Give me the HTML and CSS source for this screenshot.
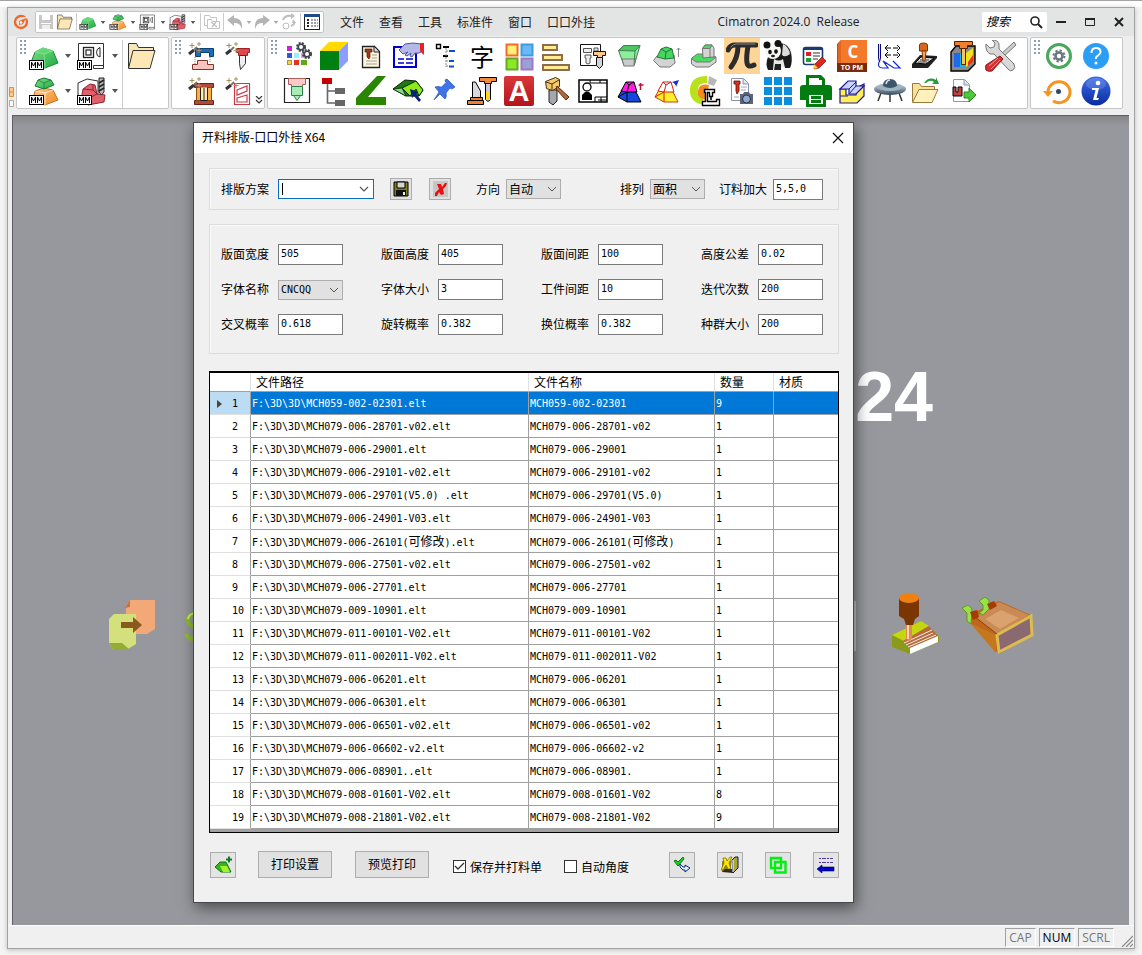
FILE: index.html
```html
<!DOCTYPE html>
<html lang="zh-CN">
<head>
<meta charset="utf-8">
<title>Cimatron 2024.0 Release</title>
<link rel="stylesheet" href="styles.css">
</head>
<body>
<svg class="defs" aria-hidden="true">
  <defs>
    <linearGradient id="gGreen" x1="0" y1="0" x2="1" y2="1"><stop offset="0" stop-color="#7fe08d"/><stop offset="1" stop-color="#1fa83f"/></linearGradient>
    <linearGradient id="gOrange" x1="0" y1="0" x2="1" y2="1"><stop offset="0" stop-color="#ffc98a"/><stop offset="1" stop-color="#f08a24"/></linearGradient>
    <linearGradient id="gRed" x1="0" y1="0" x2="0" y2="1"><stop offset="0" stop-color="#d9383a"/><stop offset="1" stop-color="#b3151b"/></linearGradient>
    <linearGradient id="gBlue" x1="0" y1="0" x2="0" y2="1"><stop offset="0" stop-color="#3f6fe8"/><stop offset="1" stop-color="#0a2aa0"/></linearGradient>
    <linearGradient id="gUfo" x1="0" y1="0" x2="0" y2="1"><stop offset="0" stop-color="#dfe9f0"/><stop offset="1" stop-color="#30475c"/></linearGradient>
    <symbol id="cube-green" viewBox="0 0 32 32">
      <path d="M2 25 7 12 15 8 25 11 30 23 17 28Z" fill="url(#gGreen)" stroke="#1d8a38"/>
      <path d="M7 12 15 8 25 11 16 14Z" fill="#5fd873" stroke="#8aeb98" stroke-width=".7"/><path d="M16 14 17 28" stroke="#8aeb98" stroke-width=".7"/>
      <use href="#mm"/>
    </symbol>
    <symbol id="mm" viewBox="0 0 32 32">
      <rect x="1.500" y="20.500" width="14" height="9" fill="#fff" stroke="#000"/>
      <path d="M3.500 28v-6l2 4 2-4v6M9.500 28v-6l2 4 2-4v6" fill="none" stroke="#000"/>
    </symbol>
    <symbol id="cube-stack" viewBox="0 0 32 32">
      <path d="M4 27 7 16 16 13 25 15 30 25 17 30Z" fill="url(#gOrange)" stroke="#c4731f"/>
      <path d="M7 16 17 18 25 15M17 18v12" fill="none" stroke="#fff" stroke-width=".7"/>
      <path d="M7 11 10 5 16 3 23 5 26 10 16 14Z" fill="url(#gGreen)" stroke="#1d7a38"/><path d="M10 5 16 8 23 5M16 8v6" fill="none" stroke="#1d7a38" stroke-width=".8"/>
      <use href="#mm"/>
    </symbol>
    <symbol id="drawing" viewBox="0 0 32 32">
      <path d="M2.500 3.500h25v25h-10v-3h10" fill="#fff" stroke="#333"/><path d="M2.500 3.500v18" stroke="#333"/>
      <rect x="7.500" y="7.500" width="10" height="10" fill="none" stroke="#222" stroke-width="1.300"/><rect x="10" y="10" width="5" height="5" fill="none" stroke="#222" stroke-width="1.200"/>
      <path d="M24 7.500q-3.500 1-3.500 5t3.500 4.500z" fill="none" stroke="#222"/><use href="#mm"/>
    </symbol>
    <symbol id="mill" viewBox="0 0 32 32">
      <path d="M2 8 11 4 22 6V22L10 26 2 20Z" fill="#fff" stroke="#333"/>
      <path d="M5 25 7 14 14 9 19 10 21 19 29 20 28 27 12 30Z" fill="#e0606c" stroke="#8e2430"/><path d="M7 14 17 15 21 19 15 22 12 30M17 15V10" fill="none" stroke="#8e2430"/>
      <path d="M23 3h5v14l-2.500 3L23 17Z" fill="#bbb" stroke="#222"/><path d="M23 8l5-3M23 12l5-3M23 16l5-3" stroke="#222" stroke-width="1.500"/><use href="#mm"/>
    </symbol>
    <symbol id="folder" viewBox="0 0 32 32">
      <path d="M2.500 28V3.500h8l2 4h15V12" fill="#fbe6b8" stroke="#333"/><path d="M2.500 28.500 7 10.500h22L24 28.500Z" fill="#fde7b4" stroke="#333"/>
    </symbol>
    <symbol id="wand" viewBox="0 0 32 32">
      <path d="M3 14 8 10" stroke="#333" stroke-width="3"/><path d="M8 10 11 7" stroke="#777" stroke-width="2"/>
      <path d="M6 3v5M3.500 5.500h5M13 8v5M10.500 10.500h5M13 2v4M11 4h4" stroke="#a8905c"/>
    </symbol>
    <symbol id="down" viewBox="0 0 8 6"><path d="M1 1h6L4 5Z" fill="#555"/></symbol>
    <symbol id="chev" viewBox="0 0 10 6"><path d="M1 1l4 4 4-4" fill="none" stroke="#555" stroke-width="1.200"/></symbol>
  </defs>
</svg>

<div class="window">
  <header class="titlebar">
    <svg class="logo" viewBox="0 0 16 16"><circle cx="8" cy="8" r="6" fill="none" stroke="#f0672a" stroke-width="2.400"/><path d="M16 3 11 6 9 3Z" fill="#e3e5e5"/><path d="M13 4 10 10 6 11 6 7Z" fill="#ef6a25"/><circle cx="8" cy="8.500" r="1.300" fill="#fff"/></svg>
    <div class="quick">
      <button aria-label="保存"><svg viewBox="0 0 18 18"><path d="M2 2h14v14H2Z" fill="#c8c8c8"/><path d="M5 2h8v5H5ZM4 10h10v1H4Z" fill="#fff"/><path d="M5 12h8v4H5Z" fill="#eee"/></svg></button>
      <button aria-label="打开"><svg viewBox="0 0 32 32"><use href="#folder"/></svg></button>
      <i class="sep"></i>
      <button aria-label="新建零件"><svg viewBox="0 0 32 32"><use href="#cube-green"/></svg></button><button class="drop" aria-label="更多"><svg viewBox="0 0 8 6"><use href="#down"/></svg></button>
      <button aria-label="新建装配"><svg viewBox="0 0 32 32"><use href="#cube-stack"/></svg></button><button class="drop" aria-label="更多"><svg viewBox="0 0 8 6"><use href="#down"/></svg></button>
      <button aria-label="新建图纸"><svg viewBox="0 0 32 32"><use href="#drawing"/></svg></button><button class="drop" aria-label="更多"><svg viewBox="0 0 8 6"><use href="#down"/></svg></button>
      <button aria-label="新建加工"><svg viewBox="0 0 32 32"><use href="#mill"/></svg></button><button class="drop" aria-label="更多"><svg viewBox="0 0 8 6"><use href="#down"/></svg></button>
      <i class="sep"></i>
      <button class="off" aria-label="复制"><svg viewBox="0 0 18 18" fill="#fff" stroke="#c4c4c4"><path d="M1.500 12.500v-10h5l1 2h6v8Z"/><path d="M4.500 15.500v-9h4l1 2h7v7Z"/><path d="M8 9l6 5M13 9l-4 5" stroke-width="1.500"/></svg></button>
      <i class="sep"></i>
      <button class="off" aria-label="撤销"><svg viewBox="0 0 18 18"><path d="M1 7l7-5v3q9 0 8 11-2-7-8-6v3Z" fill="#b4b4b4"/></svg></button><button class="drop narrow" aria-label="更多"><svg viewBox="0 0 8 6"><use href="#down"/></svg></button>
      <button class="off" aria-label="重做"><svg viewBox="0 0 18 18"><path d="M17 7l-7-5v3Q1 5 2 16q2-7 8-6v3Z" fill="#b4b4b4"/></svg></button><button class="drop narrow" aria-label="更多"><svg viewBox="0 0 8 6"><use href="#down"/></svg></button>
      <button class="off" aria-label="刷新"><svg viewBox="0 0 18 18" fill="none" stroke="#bdbdbd" stroke-width="2"><path d="M3 7q2-5 8-4M15 9q-1 3-4 4"/><path d="M11 0v6l4-3ZM12 10l4 0-3-4Z" fill="#bdbdbd" stroke="none"/><circle cx="6" cy="13" r="3" stroke-width="1"/></svg></button>
      <i class="sep"></i>
      <button aria-label="特征树"><svg viewBox="0 0 18 18"><rect x="1.500" y="1.500" width="15" height="15" fill="#fff" stroke="#222"/><path d="M1 2.500h16" stroke="#234a86" stroke-width="3"/><path d="M4 7h2M4 10h2M4 13h2" stroke="#222" stroke-width="2"/><path d="M8 7h7M8 10h7M8 13h7" stroke="#444" stroke-dasharray="2 1"/></svg></button>
    </div>
    <nav class="menu"><a href="#">文件</a><a href="#">查看</a><a href="#">工具</a><a href="#">标准件</a><a href="#">窗口</a><a href="#">口口外挂</a></nav>
    <h1>Cimatron 2024.0  Release</h1>
    <div class="search"><input type="search" aria-label="搜索" placeholder="搜索"><svg viewBox="0 0 14 14"><circle cx="6" cy="6" r="4" fill="none" stroke="#222" stroke-width="1.600"/><path d="M9 9l4 4" stroke="#222" stroke-width="2"/></svg></div>
    <div class="winbtns">
      <button aria-label="最小化"><svg viewBox="0 0 12 12"><path d="M1 6h10" stroke="#222" stroke-width="2"/></svg></button>
      <button aria-label="最大化"><svg viewBox="0 0 12 12"><path d="M1.500 2.500h9v7h-9Z" fill="none" stroke="#222"/><path d="M1 3h10" stroke="#222" stroke-width="2"/></svg></button>
      <button aria-label="关闭"><svg viewBox="0 0 12 12"><path d="M2 2l8 8M10 2l-8 8" stroke="#222" stroke-width="2"/></svg></button>
    </div>
  </header>

  <div class="ribbon">
    <svg class="gutter" viewBox="0 0 6 20"><path d="M.5.5h4v9h-4ZM.5 5h4" fill="#ffc98a" stroke="#e88c30"/><path d="M.5 13.500h4v6h-4Z" fill="#fff" stroke="#aaa"/></svg>
    <section class="panel files">
      <i class="grip"></i>
      <div class="split-grid">
        <button aria-label="零件"><svg viewBox="0 0 32 32"><use href="#cube-green"/></svg></button><button class="drop" aria-label="零件选项"><svg viewBox="0 0 8 6"><use href="#down"/></svg></button>
        <button aria-label="图纸"><svg viewBox="0 0 32 32"><use href="#drawing"/></svg></button><button class="drop" aria-label="图纸选项"><svg viewBox="0 0 8 6"><use href="#down"/></svg></button>
        <button aria-label="装配"><svg viewBox="0 0 32 32"><use href="#cube-stack"/></svg></button><button class="drop" aria-label="装配选项"><svg viewBox="0 0 8 6"><use href="#down"/></svg></button>
        <button aria-label="加工"><svg viewBox="0 0 32 32"><use href="#mill"/></svg></button><button class="drop" aria-label="加工选项"><svg viewBox="0 0 8 6"><use href="#down"/></svg></button>
      </div>
      <i class="rule"></i>
      <button class="open" aria-label="打开文件"><svg viewBox="0 0 32 32"><use href="#folder"/></svg></button>
    </section>
    <section class="panel wiz">
      <i class="grip"></i>
      <div class="icons two">
        <button aria-label="模具向导"><svg viewBox="0 0 32 32"><path d="M9.500 8.500h18v8h-4v-4h-9v4h-5Z" fill="#1e6cb5" stroke="#0d3e74"/><path d="M6.500 29.500v-5h5v-4h10v4h6v5Z" fill="#f8c4be" stroke="#7d3431"/><path d="M9 17v7M24 17v5" stroke="#3a87c8" stroke-dasharray="1 1"/><use href="#wand"/></svg></button>
        <button aria-label="电极向导"><svg viewBox="0 0 32 32"><path d="M13.500 8.500h13v4h-2v3h-9v-3h-2Z" fill="#e0474a" stroke="#9b2226"/><path d="M16.500 15.500h6v8l-5 6-1-6Z" fill="#eee" stroke="#333"/><use href="#wand"/></svg></button>
        <button aria-label="模架向导"><svg viewBox="0 0 32 32"><path d="M8.500 8.500h19v4h-19ZM8.500 25.500h19v4h-19Z" fill="#b04a3a" stroke="#6b2018"/><path d="M10.500 12.500h15v13h-15Z" fill="#f7b04a" stroke="#8a4d0d"/><path d="M14.500 12.500v13h7v-13M18 13v12" fill="#ffe9b5" stroke="#222"/><use href="#wand"/></svg></button>
        <button aria-label="冷却向导"><svg viewBox="0 0 32 32"><path d="M11.500 8.500h15v21h-15ZM14 15l10-4v5l-10 4ZM14 23l10-3v7H14Z" fill="#fff" stroke="#c93a48" stroke-width="1.200"/><use href="#wand"/></svg></button>
      </div>
      <button class="more" aria-label="展开"><svg viewBox="0 0 8 8"><path d="M1 0l3 3 3-3M1 4l3 3 3-3" fill="none" stroke="#333" stroke-width="1.200"/></svg></button>
    </section>
    <section class="panel plug">
      <i class="grip"></i>
      <div class="icons twenty">
        <button aria-label="颜色设置"><svg viewBox="0 0 32 32"><path d="M5 6h5v5H5Z" fill="#f0f"/><path d="M5 13h5v5H5Z" fill="#2a55d8"/><path d="M5 20h5v5H5Z" fill="#ffd428"/><path d="M12 13h5v5h-5Z" fill="#9ef"/><path d="M12 20h5v5h-5Z" fill="#e8321e"/><path d="M19 13h4v5h-4Z" fill="#e69af0"/><path d="M19 20h6v5h-6Z" fill="#62a812"/><path d="M5.500 6.500h4v4h-4zM5.500 13.500h4v4h-4zM5.500 20.500h4v4h-4z" fill="none" stroke="#666" stroke-width=".6"/><g fill="none" stroke="#3d444a"><circle cx="19" cy="7" r="4" stroke-width="2" stroke-dasharray="2 1.200"/><circle cx="19" cy="7" r="2.800" stroke-width="1.600"/><circle cx="25" cy="14" r="4" stroke-width="2" stroke-dasharray="2 1.200"/><circle cx="25" cy="14" r="2.800" stroke-width="1.600"/></g></svg></button>
        <button aria-label="毛坯"><svg viewBox="0 0 32 32"><path d="M1 11h19v19H1Z" fill="#008010"/><path d="M1 11 10 2h19l-9 9Z" fill="#ffd900"/><path d="M20 11 29 2v19l-9 9Z" fill="#8c9cff"/></svg></button>
        <button aria-label="图档"><svg viewBox="0 0 32 32"><path d="M6.500 6.500h12l5 5v16h-17Z" fill="#fdf6e0" stroke="#222" stroke-width="1.300"/><path d="M18 7v5h5" fill="#ddd" stroke="#222"/><path d="M9 9h7v3h-2v5l-1 2-2-2v-5H9Z" fill="#a0381c" stroke="#5a1608" stroke-width=".7"/><path d="M16 15h5M16 18h5M10 21h11M10 24h11" stroke="#a99f88"/></svg></button>
        <button aria-label="属性"><svg viewBox="0 0 32 32"><path d="M1 7h22v20H1Z" fill="#fff" stroke="#0000d0" stroke-width="2"/><path d="M5 19h6M13 19h7M5 23h6M13 23h7" stroke="#0000d0" stroke-width="1.600"/><path d="M6 10 12 4q8-2 16 0v8q-3 2-6 1l-3 4-2-1 1-3-4 3-2-1 3-3-5 2Z" fill="#b5b8e8" stroke="#5055a8"/><path d="M27 3h4v12q-4-3-4-5Z" fill="#f02020"/></svg></button>
        <button aria-label="结构树"><svg viewBox="0 0 32 32"><path d="M6.500 4.500h4v4h-4Z" fill="#fff" stroke="#000" stroke-width="1.400"/><path d="M13 7h6M13 16h5" stroke="#000" stroke-width="2"/><path d="M16 8v19M16 11h3M16 21h3M16 26h3" stroke="#888" fill="none" stroke-dasharray="2 1"/><path d="M19 11h6M19 21h5M19 26.500h5" stroke="#0a4fd8" stroke-width="2.200"/></svg></button>
        <button class="glyph" aria-label="刻字">字</button>
        <button aria-label="布局"><svg viewBox="0 0 32 32"><path d="M2.500 4.500h11v11h-11Z" fill="#fff176" stroke="#f36b2c" stroke-width="2"/><path d="M17.500 4.500h11v11h-11Z" fill="#6ab8f5" stroke="#3d9cdf" stroke-width="2"/><path d="M2.500 18.500h11v11h-11Z" fill="#8bea24" stroke="#6aa52c" stroke-width="2"/><path d="M17.500 18.500h11v11h-11Z" fill="#9ba0d5" stroke="#a276c4" stroke-width="2"/></svg></button>
        <button aria-label="排序"><svg viewBox="0 0 32 32" fill="#ffec94" stroke="#8f6c4b" stroke-width="2"><path d="M2 5h14v5H2ZM2 15h19v5H2ZM2 25h26v5H2Z"/></svg></button>
        <button aria-label="电极图"><svg viewBox="0 0 32 32"><path d="M2.500 4.500h20v21h-20Z" fill="#fff" stroke="#111"/><path d="M5.500 8.500h8v4h-8ZM7 15h6v3h-1v5l-2 1-2-1v-5H7ZM16 8h4v3h-4Z" fill="#eee" stroke="#555"/><path d="M15.500 11.500h12v4h-3v2h-5v-2h-4Z" fill="#fbc98c" stroke="#111"/><path d="M18.500 17.500h6v8l-3 3-3-3Z" fill="#d0d4da" stroke="#111"/></svg></button>
        <button aria-label="型腔"><svg viewBox="0 0 32 32" stroke="#4a7a55"><path d="M3.500 10.500 9 5.500h16L19 25.500H9Z" fill="#8cf09a"/><path d="M7 19h14l-2 7H9Z" fill="#ccc" stroke="#777"/><path d="M3.500 10.500 9 5.500h16L20 11Z" fill="#49c960"/><path d="M20 11 19 25" fill="none"/></svg></button>
        <button aria-label="型芯"><svg viewBox="0 0 32 32"><path d="M1.500 20.500 5 16l17-1 1 8-5 4H8Z" fill="#d3d3d3" stroke="#777"/><path d="M5 17 9 9l5-2 6 2 2 9-9 1Z" fill="#46d55e" stroke="#1f7a35"/><path d="M9 9l5 3 6-3M14 12l-1 7" stroke="#1f7a35" fill="none"/><path d="M26.500 17V8m-2 2 2-2 2 2" stroke="#888" fill="none"/></svg></button>
        <button aria-label="台阶"><svg viewBox="0 0 32 32" stroke="#777"><path d="M2.500 18.500 8 15l19 2v5l-7 5H7l-4.500-3Z" fill="#d4d4d4"/><path d="M2.500 18.500 8 14h6v3h13l-6 5H7Z" fill="#49dc60"/><path d="M13.500 8.500 16 5h7l2 3v9l-11 1Z" fill="#d4d4d4"/><path d="M13.500 8.500 16 5h7l-2 3.500Z" fill="#49dc60"/><path d="M21 8.500v9" fill="none"/></svg></button>
        <button class="on" aria-label="公式"><svg viewBox="0 0 32 32" fill="none" stroke="#2c2c2c" stroke-linecap="round"><path d="M2 10Q4 5 9 5H30" stroke-width="5"/><path d="M12 6Q12 18 5 27" stroke-width="5"/><path d="M22 6Q20 18 21 23T28 25" stroke-width="5"/><path d="M5 7Q7 4 10 4H29" stroke="#888" stroke-width="1"/></svg></button>
        <button aria-label="熊猫"><svg viewBox="0 0 32 32"><ellipse cx="18" cy="15" rx="11" ry="12" fill="#e9e9e4"/><path d="M17 3q9 1 11 10t-1 15h-5l-2-9q-4 3-9 0l-1 11H5Q2 24 5 17q7-2 12-14Z" fill="#1b1b1b"/><path d="M20 4q6 3 7 10-5 4-8 1Z" fill="#ddd"/><circle cx="10" cy="11" r="8" fill="#f6f6f2"/><circle cx="4" cy="5" r="3.500" fill="#111"/><circle cx="15" cy="3.500" r="3.500" fill="#111"/><ellipse cx="7" cy="12" rx="1.800" ry="2.200" fill="#111"/><ellipse cx="13" cy="11.500" rx="1.800" ry="2.200" fill="#111"/><ellipse cx="10" cy="16" rx="2" ry="1.300" fill="#222"/><path d="M12 24h6v6h-7Z" fill="#222"/></svg></button>
        <button aria-label="编辑表单"><svg viewBox="0 0 32 32"><rect x="3.500" y="7.500" width="19" height="17" rx="2" fill="#fff" stroke="#1c3a70" stroke-width="1.600"/><path d="M4 9h18" stroke="#1c3a70" stroke-width="2"/><path d="M6 12h5v4H6Z" fill="#e02020"/><path d="M6 18h5v4H6Z" fill="#19a030"/><path d="M13 13h7M13 16h7M13 19h5" stroke="#333"/><path d="m15 24 7-7 4 4-7 7-5 1Z" fill="#e3261c" stroke="#7a0e08" stroke-width=".7"/><path d="m14 24 4 4-5 1Z" fill="#ffd23a"/></svg></button>
        <button aria-label="C TO PM"><svg viewBox="0 0 32 32"><path d="M0 4 4 0h26v28l-3 4H0Z" fill="#c34a14"/><path d="M4 0h26v23H4Z" fill="#f47a2b"/><path d="M1 4 4 0v23H1Z" fill="#e8661c"/><path d="M0 23h30v9H0Z" fill="#7a2a0c"/><text x="16" y="18" class="t-c">C</text><text x="15" y="30" class="t-pm">TO PM</text></svg></button>
        <button aria-label="刀路"><svg viewBox="0 0 32 32" fill="none"><path d="M4.500 4v14l1 4 1-4V4" fill="#ffef5a" stroke="#0a0a80"/><path d="M12 8h13M12 15h13" stroke="#000" stroke-dasharray="5 2"/><path d="m14 5-3 3 3 3M23 5l3 3-3 3M14 12l-3 3 3 3M23 12l3 3-3 3" stroke="#000"/><path d="M5 22q-2 6 4 6h5l-5-7 11 7h6l-7-7" stroke="#1028d8" stroke-width="1.200"/></svg></button>
        <button aria-label="冲压"><svg viewBox="0 0 32 32"><path d="M1 24 9 15l17 1v2l-9 10H1Z" fill="#222"/><path d="M4 23 10 17l13 1-8 6Z" fill="#ddd" stroke="#000"/><path d="M7 22h9M9 20h9" stroke="#444"/><path d="M8.500 5q0-2 4-2t4 2v6h-8Z" fill="#d8691c" stroke="#7a3408"/><path d="M11 11h4l-1 10h-2Z" fill="#f0a860" stroke="#7a3408"/></svg></button>
        <button aria-label="放电"><svg viewBox="0 0 32 32"><path d="M3 12 8 6h19v18l-7 7H3Z" fill="#888" stroke="#000" stroke-width="1.400"/><path d="M6 13h6v14H6Z" fill="#1e6ae8"/><path d="M12 13h6v14h-6Z" fill="#1fb4e8"/><path d="m18 13 7-5v14l-7 5Z" fill="#f6e21c"/><path d="m20 22 5-7v7l-5 4Z" fill="#e8301c"/><path d="M6.500 1.500h18v4h-5v3h-8v-3h-5Z" fill="#f08030" stroke="#5a1e00"/><path d="M13.500 8.500h4v16h-4Z" fill="#f6c45c" stroke="#5a1e00"/></svg></button>
        <button aria-label="工具"><svg viewBox="0 0 32 32"><path d="M29 2 31 5 17 18l-3-2Z" fill="#ccc" stroke="#777"/><path d="M1 4 5 8l4-1 1-4-3-3q6 0 7 4v5l15 15q2 4-1 6t-5-1L9 14H5Q0 11 1 4Z" fill="#d8d8d8" stroke="#777"/><path d="M15 16 18 19 7 31q-4 1-6-1-1-3 0-5Z" fill="#d92f30" stroke="#8a1416"/><path d="m4 26 9-8M6 29l9-9" stroke="#ff9a96"/></svg></button>

        <button aria-label="电极"><svg viewBox="0 0 32 32"><path d="M2.500 3.500h25v24h-25Z" fill="#fff" stroke="#222" stroke-width="1.200"/><path d="M6.500 3.500h17v6h-3v2h-11v-2h-3Z" fill="#ffc9c9" stroke="#b05a5a"/><path d="M9.500 11.500h11v9h-2l-3.500 5-3.500-5h-2Z" fill="#a9ecb7" stroke="#2b8044"/><path d="M11 20.500h8" stroke="#2b8044"/></svg></button>
        <button aria-label="层级"><svg viewBox="0 0 32 32"><path d="M3 3h10v6H3Z" fill="#c40000"/><path d="M8.500 9v19H16M8.500 16H16" fill="none" stroke="#666" stroke-width="1.600"/><path d="M16 13h10v6H16ZM16 25h10v6H16Z" fill="#666"/></svg></button>
        <button aria-label="角度"><svg viewBox="0 0 32 32"><path d="M21 1h9L12 22h18v8H0v-7Z" fill="#2a8500"/></svg></button>
        <button aria-label="选择体"><svg viewBox="0 0 32 32"><path d="m0 14 12-9 11 1 7 9-4 6-13 0Z" fill="#1c7a10" stroke="#052a02"/><path d="m9 13 14-7 7 9-4 6-3-7-6 7Z" fill="#8ee81c" stroke="#052a02"/><path d="m0 14 9-1 4 8Z" fill="#8ad88a" stroke="#052a02" stroke-width=".8"/><path d="m17 14 8 3-2 2 5 6-2 2-5-6-2 2Z" fill="#0a1e80"/></svg></button>
        <button aria-label="固定"><svg viewBox="0 0 32 32"><path d="m17 4 8 8-3 2-2-1-4 5q1 4-1 6l-5-5-6 6 5-8-4-5q3-1 6 0l5-4-1-3Z" fill="#3f74e8" stroke="#2450b4" stroke-width=".7"/><path d="m16 7-5 5" stroke="#a9c4ff"/></svg></button>
        <button aria-label="刀柄"><svg viewBox="0 0 32 32"><path d="M5.500 23V7h3l5 9v7Z" fill="#d9d9df" stroke="#000"/><path d="M3.500 22.500h12v3h-12ZM.5 25.500h16v4H.5Z" fill="#f08030" stroke="#000"/><path d="M12.500 2.500h17v4h-5v2h-7v-2h-5Z" fill="#f08a3c" stroke="#000"/><path d="M18.500 8.500h5v16l-2.500 2-2.500-2Z" fill="#c8c8e0" stroke="#000"/><path d="M19 17h4v8h-4Z" fill="#ffd81c"/></svg></button>
        <button aria-label="标注文字"><svg viewBox="0 0 32 32"><rect y="1" width="30" height="30" rx="2" fill="url(#gRed)"/><text x="15" y="26" class="t-a">A</text></svg></button>
        <button aria-label="敲击"><svg viewBox="0 0 32 32"><path d="M8 15h8v11l-4 4-4-3Z" fill="#a4a8ac" stroke="#222"/><path d="m4.500 6.500 10-4 4 2v7l-7 4-6-2Z" fill="#f6c96a" stroke="#4a3208"/><path d="m5 7 6 2 7-4M11 9v6" stroke="#4a3208" fill="none"/><path d="m16 11 12 11-3 3-10-11Z" fill="#b56a3c" stroke="#5a2a10"/></svg></button>
        <button aria-label="图框"><svg viewBox="0 0 32 32"><path d="M1 5h28v22H1Z" fill="#fff" stroke="#000" stroke-width="1.500"/><path d="M12 5v3h17M22 5v3M17 27v-5h12M20 25h9M23 22v5" stroke="#000" fill="none"/><circle cx="9" cy="12" r="4" fill="#fff" stroke="#000" stroke-width="1.300"/><path d="M4 25v-5l3-3h4l3 3v5Z"/></svg></button>
        <button aria-label="升高"><svg viewBox="0 0 32 32"><path d="m3 22 4-7h13l6 12H12Z" fill="#1446e0" stroke="#000"/><path d="m6 16 5-9h8l3 10H12Z" fill="#ff1ce0" stroke="#000"/><path d="m11 7 3 3 5-3M14 10l-2 7v10M3 22l9-5" stroke="#000" fill="none"/><path d="M25.500 15V8m-2 2h5" stroke="#c01030" stroke-width="1.500"/></svg></button>
        <button aria-label="旋转"><svg viewBox="0 0 32 32"><path d="m3 22 4-7h13l6 12H12Z" fill="#fff02a" stroke="#d03818"/><path d="m6 16 5-9h8l3 10H12Z" fill="#fff" stroke="#e01818"/><path d="m11 7 3 3 5-3M14 10l-2 7v10M3 22l9-5" stroke="#e01818" fill="none"/><path d="m20 7 7-2-3 7q0-3-4-5Z" fill="#1430d0"/></svg></button>
        <button aria-label="机床"><svg viewBox="0 0 32 32"><path d="M18 1Q2 1 1 14t13 16v-8q-5-2-5-8t9-6Z" fill="#b9e21c"/><path d="M20 10q-10-2-11 6t8 9Z" fill="#f58a1f"/><path d="m20 1 8 4-3 6-6-2Z" fill="#b8b8b8"/><path d="M15.500 14.500h10v3h-2v4h-3v-4h-2v9h9v-2h3v6h-17v-4h3v-9h-1Z" fill="#fff" stroke="#000" stroke-width="1.400"/><path d="M22 21v4" stroke="#000" stroke-width="1.600"/></svg></button>
        <button aria-label="拍照"><svg viewBox="0 0 32 32"><path d="M5.500 3.500h12l5 5v17h-17Z" fill="#fff" stroke="#8a94a8"/><path d="M17 4v5h5" fill="#dde4f0" stroke="#8a94a8"/><path d="M8 6h6v3h-1v7l-2 3-1-3V9H8Z" fill="#e0301c" stroke="#5a0a00" stroke-width=".8"/><path d="M15 12h6M15 15h5M8 22h5" stroke="#9ab"/><path d="M14 19h3l1-2h5l1 2h3v10H14Z" fill="#5a6678"/><circle cx="20.500" cy="24" r="4" fill="#8fa8d8" stroke="#333"/></svg></button>
        <button aria-label="阵列"><svg viewBox="0 0 32 32" fill="#0b8ee0"><path d="M1 2h8v8H1ZM11 2h8v8h-8ZM21 2h8v8h-8ZM1 12h8v8H1ZM11 12h8v8h-8ZM21 12h8v8h-8ZM1 22h8v8H1ZM11 22h8v8h-8ZM21 22h8v8h-8Z"/></svg></button>
        <button aria-label="打印"><svg viewBox="0 0 32 32" fill="#007d10"><path fill-rule="evenodd" d="M6 0h15l4 4v7H6ZM9 3h10v2h3v6H9Z"/><path d="M3 10h26q3 0 3 3v12h-6v-6H6v6H0V13q0-3 3-3Z"/><path fill-rule="evenodd" d="M6 17h20v15H6ZM9 20v9h14v-9Z"/><path d="M11 21h10v3H11ZM11 25h10v3H11Z"/></svg></button>
        <button aria-label="分层"><svg viewBox="0 0 32 32"><path d="M3 14h6v6h10v-7l8-4v12l-7 7H3Z" fill="#ffee58" stroke="#1a1a90" stroke-width="1.200"/><path d="m3 14 8-8h8v5h8l-8 8h-7v-5Z" fill="#c8d2ff" stroke="#1a1a90" stroke-width="1.200"/><path d="m12 14 7-7M12 19l7-8M3 21h8" stroke="#1a1a90" fill="none"/></svg></button>
        <button aria-label="飞碟"><svg viewBox="0 0 32 32"><path d="M7 18 4 26M16 20v7M25 18l3 8" stroke="#333" stroke-width="1.500"/><ellipse cx="16" cy="14" rx="16" ry="6" fill="url(#gUfo)"/><ellipse cx="16" cy="12" rx="12" ry="4" fill="#9fb2c0"/><path d="M9 11q0-7 7-7t7 7q-7 4-14 0Z" fill="#3c556b"/><path d="M12 9q1-4 4-4" stroke="#dbe8f2" stroke-width="1.500" fill="none"/></svg></button>
        <button aria-label="导入"><svg viewBox="0 0 32 32"><path d="M1.500 27V8.500h7l2 3h13V14" fill="#f8dfa0" stroke="#9a7c3a"/><path d="M1.500 27.500 8 14.500h19L21 27.500Z" fill="#fff0bc" stroke="#9a7c3a"/><path d="M13 8q5-7 12-3V2l3 7h-7l2-2q-4-3-8 1Z" fill="#2b9a3a"/></svg></button>
        <button aria-label="导出"><svg viewBox="0 0 32 32"><path d="M5.500 4.500h11l5 5v17h-16Z" fill="#fff" stroke="#8a9ab8"/><path d="M16 5v5h5" fill="#dde" stroke="#8a9ab8"/><path d="M5 12h3v5h2v-5h4v9H5Z" fill="#c44040" stroke="#000"/><path d="M16 17h5v-4l7 7-7 7v-4h-5Z" fill="#4cc83a" stroke="#248a1c"/></svg></button>
      </div>
    </section>
    <section class="panel help">
      <i class="grip"></i>
      <div class="icons two">
        <button aria-label="设置"><svg viewBox="0 0 32 32"><circle cx="16" cy="16" r="11.500" fill="#fff" stroke="#49a85c" stroke-width="3"/><circle cx="16" cy="16" r="3.500" fill="none" stroke="#6a7682" stroke-width="2.600"/><circle cx="16" cy="16" r="5.500" fill="none" stroke="#6a7682" stroke-width="2" stroke-dasharray="2.300 2"/></svg></button>
        <button aria-label="帮助"><svg viewBox="0 0 32 32"><circle cx="16" cy="16" r="13" fill="#2a9df4"/><path d="M11.500 13q0-5 4.500-5t4.500 4q0 2-2.500 3.500T16 19" fill="none" stroke="#fff" stroke-width="2"/><circle cx="16" cy="23" r="1.500" fill="#fff"/></svg></button>
        <button aria-label="恢复"><svg viewBox="0 0 32 32"><path d="M5 18a11 10.500 0 1 1 5 8" fill="none" stroke="#f79420" stroke-width="3"/><path d="M0 16h10l-5 6Z" fill="#f79420"/><circle cx="15.500" cy="16.500" r="2.500" fill="#2c4a66"/></svg></button>
        <button aria-label="关于"><svg viewBox="0 0 32 32"><circle cx="16" cy="16" r="14.500" fill="url(#gBlue)"/><ellipse cx="16" cy="9" rx="10" ry="6" fill="#fff" opacity=".15"/><circle cx="18" cy="8" r="2.300" fill="#fff"/><path d="M12 13h7l-2.500 10h2.500l-1 2h-5l2.500-10H12Z" fill="#fff"/></svg></button>
      </div>
    </section>
  </div>

  <main class="canvas">
    <span class="splash">24</span>
    <svg class="pin copy" viewBox="0 0 48 54"><path d="M22 2h25v29l-8 5H18V8Z" fill="#f3a878"/><path d="M22 2v7l-5 1Z" fill="#c9713c"/><path d="M1 21l5-5h22v30l-8 5H5l-4-6Z" fill="#d3e07c"/><path d="M1 45h13l7 6H5Z" fill="#93ac34"/><path d="M13 24h12v-5l9 8-9 8v-5H13Z" fill="#8a5a1c"/></svg>
    <svg class="pin spring" viewBox="0 0 12 32"><path d="M12 3Q3 3 3 9t9 8M12 29q-9-1-11-6" fill="none" stroke="#8ebf2c" stroke-width="4"/><path d="M12 2Q4 2 3 8" fill="none" stroke="#c8f060" stroke-width="2"/></svg>
    <i class="pin sliver"></i>
    <svg class="pin drill" viewBox="0 0 50 64"><path d="M1 43 30 29 48 44 48 50 19 62 1 55Z" fill="#8c9a1c"/><path d="M1 43 30 29l8 5L13 49Z" fill="#c3d60f"/><path d="M12 49 38 34l9 10-28 12Z" fill="#b86a3a"/><path d="m13 51 28-13M15 53l27-12M17 55l28-12" stroke="#eee"/><path d="m19 56 28-12v6L19 62Z" fill="#fff"/><path d="M8 6h20v18l-4 3-2 6h-7l-2-6-5-3Z" fill="#7b3500"/><ellipse cx="18" cy="6" rx="10" ry="5" fill="#f08010"/><path d="M15 33h6v14l-3 2-3-2Z" fill="#e08a50"/><path d="M17 33v14" stroke="#ffd9b0" stroke-width="2"/></svg>
    <svg class="pin cavity" viewBox="0 0 74 60"><path d="M8 24 12 16 38 4 70 18 72 38 38 57Z" fill="#c0661c"/><path d="M14 20 38 5 68 18 36 37Z" fill="#c98a55"/><path d="m24 22 16-9 18 8-19 11Z" fill="#d9a26e"/><path d="M9 26 35 38v18Z" fill="#c5771f"/><path d="m36 38 34-19 1 19-33 17Z" fill="#8a6a70" stroke="#dcbb50" stroke-width="3"/><path d="M14 20 36 37" stroke="#8a4208" fill="none"/><path d="M1 11 7 8l4 4-1 15-4-3V16ZM18 4l6-4 4 3v9l-6 6-4-2 4-3V8Z" fill="#9be048" stroke="#5f9a1c"/><path d="m9 15 7-2 2 7-6 3ZM26 7l7-3 3 5-7 4Z" fill="#a53c04"/></svg>

    <form class="dialog">
      <header class="dlg-title"><h2>开料排版-口口外挂 X64</h2><button type="button" aria-label="关闭"><svg viewBox="0 0 12 12"><path d="M1 1l10 10M11 1 1 11" stroke="#111" stroke-width="1.200"/></svg></button></header>
      <div class="dlg-body">
        <div class="box scheme">
          <label for="plan">排版方案</label>
          <div class="combo"><i class="caret"></i><input id="plan" type="text"><button type="button" aria-label="展开方案"><svg viewBox="0 0 10 6"><use href="#chev"/></svg></button></div>
          <button type="button" class="tool save" aria-label="保存方案"><svg viewBox="0 0 16 16"><path d="M1 1h14v14H1Z" fill="#7d7d1c" stroke="#000"/><path d="M4 1h8v6H4Z" fill="#d4d4d4" stroke="#000"/><path d="M3 9h10v6H3Z" fill="#111"/><path d="M10 11h2v3h-2Z" fill="#eee"/></svg></button>
          <button type="button" class="tool del" aria-label="删除方案"><svg viewBox="0 0 16 16"><path d="M1 0h15v16H1Z" fill="#c6c6c6"/><path d="M5 3h4l1 3 3-4h2l-1 3-3 3 1 5-3 1-2-3-2 4H3v-3l4-4Z" fill="#e81010"/></svg></button>
          <label for="dir">方向</label><select id="dir"><option>自动</option></select>
          <label class="push" for="sort">排列</label><select id="sort"><option>面积</option></select>
          <label class="far" for="grow">订料加大</label><input id="grow" type="text" value="5,5,0">
        </div>
        <div class="box params">
          <div><label for="p1">版面宽度</label><input id="p1" value="505"></div>
          <div><label for="p2">版面高度</label><input id="p2" value="405"></div>
          <div><label for="p3">版面间距</label><input id="p3" value="100"></div>
          <div><label for="p4">高度公差</label><input id="p4" value="0.02"></div>
          <div><label for="p5">字体名称</label><select id="p5" class="mono"><option>CNCQQ</option></select></div>
          <div><label for="p6">字体大小</label><input id="p6" value="3"></div>
          <div><label for="p7">工件间距</label><input id="p7" value="10"></div>
          <div><label for="p8">迭代次数</label><input id="p8" value="200"></div>
          <div><label for="p9">交叉概率</label><input id="p9" value="0.618"></div>
          <div><label for="p10">旋转概率</label><input id="p10" value="0.382"></div>
          <div><label for="p11">换位概率</label><input id="p11" value="0.382"></div>
          <div><label for="p12">种群大小</label><input id="p12" value="200"></div>
        </div>
        <div class="grid">
          <table>
            <colgroup><col class="c-no"><col><col class="c-name"><col class="c-qty"><col class="c-mat"></colgroup>
            <thead><tr><th></th><th>文件路径</th><th>文件名称</th><th>数量</th><th>材质</th></tr></thead>
            <tbody>
              <tr class="sel"><th>1</th><td>F:\3D\3D\MCH059-002-02301.elt</td><td>MCH059-002-02301</td><td>9</td><td></td></tr>
              <tr><th>2</th><td>F:\3D\3D\MCH079-006-28701-v02.elt</td><td>MCH079-006-28701-v02</td><td>1</td><td></td></tr>
              <tr><th>3</th><td>F:\3D\3D\MCH079-006-29001.elt</td><td>MCH079-006-29001</td><td>1</td><td></td></tr>
              <tr><th>4</th><td>F:\3D\3D\MCH079-006-29101-v02.elt</td><td>MCH079-006-29101-v02</td><td>1</td><td></td></tr>
              <tr><th>5</th><td>F:\3D\3D\MCH079-006-29701(V5.0) .elt</td><td>MCH079-006-29701(V5.0)</td><td>1</td><td></td></tr>
              <tr><th>6</th><td>F:\3D\3D\MCH079-006-24901-V03.elt</td><td>MCH079-006-24901-V03</td><td>1</td><td></td></tr>
              <tr><th>7</th><td>F:\3D\3D\MCH079-006-26101(<span class="han">可修改</span>).elt</td><td>MCH079-006-26101(<span class="han">可修改</span>)</td><td>1</td><td></td></tr>
              <tr><th>8</th><td>F:\3D\3D\MCH079-006-27501-v02.elt</td><td>MCH079-006-27501-v02</td><td>1</td><td></td></tr>
              <tr><th>9</th><td>F:\3D\3D\MCH079-006-27701.elt</td><td>MCH079-006-27701</td><td>1</td><td></td></tr>
              <tr><th>10</th><td>F:\3D\3D\MCH079-009-10901.elt</td><td>MCH079-009-10901</td><td>1</td><td></td></tr>
              <tr><th>11</th><td>F:\3D\3D\MCH079-011-00101-V02.elt</td><td>MCH079-011-00101-V02</td><td>1</td><td></td></tr>
              <tr><th>12</th><td>F:\3D\3D\MCH079-011-002011-V02.elt</td><td>MCH079-011-002011-V02</td><td>1</td><td></td></tr>
              <tr><th>13</th><td>F:\3D\3D\MCH079-006-06201.elt</td><td>MCH079-006-06201</td><td>1</td><td></td></tr>
              <tr><th>14</th><td>F:\3D\3D\MCH079-006-06301.elt</td><td>MCH079-006-06301</td><td>1</td><td></td></tr>
              <tr><th>15</th><td>F:\3D\3D\MCH079-006-06501-v02.elt</td><td>MCH079-006-06501-v02</td><td>1</td><td></td></tr>
              <tr><th>16</th><td>F:\3D\3D\MCH079-006-06602-v2.elt</td><td>MCH079-006-06602-v2</td><td>1</td><td></td></tr>
              <tr><th>17</th><td>F:\3D\3D\MCH079-006-08901..elt</td><td>MCH079-006-08901.</td><td>1</td><td></td></tr>
              <tr><th>18</th><td>F:\3D\3D\MCH079-008-01601-V02.elt</td><td>MCH079-008-01601-V02</td><td>8</td><td></td></tr>
              <tr><th>19</th><td>F:\3D\3D\MCH079-008-21801-V02.elt</td><td>MCH079-008-21801-V02</td><td>9</td><td></td></tr>
            </tbody>
          </table>
        </div>
        <footer class="actions">
          <button type="button" class="act" aria-label="添加"><svg viewBox="0 0 18 18"><path d="m1 11 5-5 6 0 5 10-10 0Z" fill="#35b520" stroke="#0c7a08"/><path d="M6 10h7l3 6H9Z" fill="#a6f02c"/><path d="M12 3.500h6M15 .5v6" stroke="#0c7a28" stroke-width="2"/></svg></button>
          <button type="button" class="text">打印设置</button>
          <button type="button" class="text">预览打印</button>
          <label class="tick"><input type="checkbox" checked>保存并打料单</label>
          <label class="tick"><input type="checkbox">自动角度</label>
          <span class="right">
            <button type="button" class="act" aria-label="确定"><svg viewBox="0 0 18 18"><path d="m1 5 2-1 2 2 5-5 1 2-6 7Z" fill="#18d020" stroke="#0b7d10"/><path d="M7 8v3l3 3h2v2l5-4-5-3v2h-2Z" fill="#d8f0ff" stroke="#102a80"/></svg></button>
            <button type="button" class="act" aria-label="退出"><svg viewBox="0 0 18 18"><path d="M1 5h9v11H1Z" fill="#8a8a20"/><path d="m1 16 3-3h8v4Z" fill="#332c10"/><path d="M11 4l3-3h3v11l-5 5Z" fill="#a8a830" stroke="#10106a"/><path d="M12 4v12" stroke="#fff"/><path d="M2 2h3l1 3 3-4h2L8 7l2 6H7L5 9l-3 5H0l3-7Z" fill="#ffe800" stroke="#5a4a00" stroke-width=".6"/></svg></button>
            <button type="button" class="act" aria-label="复制"><svg viewBox="0 0 18 18" fill="none" stroke="#00f010" stroke-width="2.400"><path d="M2 2h10v10H2ZM6 6h10.500v10.500H6Z"/></svg></button>
            <button type="button" class="act" aria-label="返回"><svg viewBox="0 0 18 18"><path d="M2 2.500h14M2 6.500h14" stroke="#50389a" stroke-dasharray="2 1 4 1"/><path d="m0 13 5-4v2h12v4H5v2Z" fill="#0000c8" stroke="#00005a" stroke-width=".6"/></svg></button>
          </span>
        </footer>
      </div>
    </form>
  </main>

  <footer class="status"><span>CAP</span><span class="lit">NUM</span><span>SCRL</span><svg viewBox="0 0 12 12"><path d="M12 1 1 12M12 5l-7 7M12 9l-3 3" stroke="#888" stroke-width="1.200"/></svg></footer>
</div>
</body>
</html>
```
FILE: styles.css
```css
* { box-sizing: border-box; }
html { background: #f4f4f4; }
body {
  margin: 0;
  min-height: 100vh;
  display: flex;
  border-top: 1px solid #a3a3a3;
  padding: 6px 7px 6px;
  background: linear-gradient(#fff 6px, #f4f4f4 6px);
  font: 12px/16px "Noto Sans CJK SC", sans-serif;
  color: #000;
}
button, input, select { font: inherit; color: inherit; margin: 0; }
button { padding: 0; border: 0; background: none; display: flex; align-items: center; justify-content: center; }
svg { display: block; }
.defs { position: absolute; width: 0; height: 0; }
i { display: block; flex: none; }

.window {
  flex: 1;
  display: flex;
  flex-direction: column;
  border: 1px solid #a3a3a3;
  background: #eee;
  box-shadow: 0 1px 5px #bbb;
}

/* title bar */
.titlebar { display: flex; align-items: center; height: 28px; background: #e3e5e5; }
.logo { width: 16px; height: 16px; margin: 0 6px 0 5px; }
.quick { display: flex; align-items: center; gap: 1px; height: 22px; padding: 0 2px 0 1px; background: #fff; border: 1px solid #c4c6c6; border-radius: 2px; }
.quick button, .quick button svg { width: 18px; height: 18px; }
.quick .drop { width: 10px; }
.quick .narrow { width: 7px; opacity: .5; }
.quick .drop svg, .drop svg { width: 6px; height: 5px; }
.sep { width: 1px; height: 18px; margin: 0 1px; background: #ccc; }
.menu { display: flex; gap: 15px; margin-left: 16px; }
.menu a { color: #222; text-decoration: none; }
h1 { margin: 0 auto; font: 12px/16px "Open Sans", sans-serif; white-space: pre; color: #222; }
.search { display: flex; align-items: center; width: 65px; height: 20px; padding: 0 4px; background: #fff; border-radius: 2px; }
.search input { flex: 1; min-width: 0; width: 0; height: 18px; padding: 0 0 4px; border: 0; outline: 0; background: none; font-style: italic; }
.search input::placeholder { color: #000; opacity: 1; }
.search svg { width: 14px; height: 14px; }
.winbtns { display: flex; }
.winbtns button { width: 29px; height: 20px; }
.winbtns svg { width: 12px; height: 12px; }

/* tool panels */
.ribbon { display: flex; align-items: stretch; gap: 2px; padding: 1px 11px 6px 1px; background: #eee; }
.gutter { width: 6px; height: 20px; align-self: flex-end; margin: 0 -1px 2px 0; }
.panel { display: flex; height: 72px; background: #fff; border: 1px solid #c6c6c6; border-radius: 2px; padding-top: 2px; }
.grip { width: 6px; height: 15px; margin: 0 0 0 3px; background: radial-gradient(circle at 1px 1px, #8aa0b8 1px, transparent 1px) 0 0 / 4px 4px; }
.files { width: 153px; }
.files .grip { margin-right: 2px; }
.split-grid { display: grid; grid-template-columns: 32px 16px 32px 14px; grid-template-rows: 32px 32px; row-gap: 3px; }
.panel button svg { width: 32px; height: 32px; }
.panel .drop svg { width: 8px; height: 6px; }
.rule { width: 1px; margin: 0 3px 0 0; background: #ccc; }
.open { height: 32px; }
.wiz { width: 94px; }
.icons { display: grid; grid-template-rows: 32px 32px; gap: 3px 5px; margin-left: 5px; }
.two { grid-template-columns: 32px 32px; }
.twenty { grid-template-columns: repeat(20, 32px); }
.panel .more { align-self: flex-end; margin: 0 0 4px; }
.panel .more svg { width: 8px; height: 8px; }
.plug { flex: 1; }
.help { width: 93px; }
.help .icons { margin-left: 3px; }
.glyph { font-family: "Noto Sans CJK SC", sans-serif; font-size: 24px; line-height: 32px; padding-right: 2px; }
.on { background: #ffd597; box-shadow: 0 0 0 2px #ffd597; }
.t-c { font: bold 17px "Open Sans", sans-serif; fill: #fff; text-anchor: middle; }
.t-pm { font: bold 7px "Open Sans", sans-serif; fill: #fff; text-anchor: middle; }
.t-a { font: bold 29px "Liberation Sans", sans-serif; fill: #fff; text-anchor: middle; }

/* drawing area */
.canvas {
  position: relative;
  flex: 1;
  margin: 0 5px 0 4px;
  padding: 6px 275px 22px 180px;
  border-top: 1px solid #606063;
  border-left: 1px solid #606063;
  background: linear-gradient(#858589, #97989d 10px);
}
.pin, .splash { position: absolute; }
.splash { right: 196px; top: 246px; font: bold 70px/70px "Liberation Sans", sans-serif; color: #fff; }
.copy { left: 95px; top: 482px; width: 48px; height: 54px; }
.spring { left: 172px; top: 495px; width: 12px; height: 32px; }
.sliver { right: 273px; top: 485px; width: 2px; height: 50px; background: #c4c4c4; }
.drill { right: 188px; top: 476px; width: 50px; height: 64px; }
.cavity { right: 94px; top: 481px; width: 74px; height: 60px; }

/* dialog */
.dialog { position: relative; border: 1px solid #48484b; background: #f0f0f0; box-shadow: 2px 5px 14px rgba(0, 0, 0, .5); }
.dlg-title { display: flex; align-items: center; justify-content: space-between; height: 30px; padding: 0 9px 0 8px; background: #fff; }
h2 { margin: 0; padding-bottom: 2px; font: 12px/16px "Noto Sans CJK SC", sans-serif; }
.dlg-title svg { width: 12px; height: 12px; }
.dlg-body { padding: 15px 14px 24px 15px; }
.box { border: 1px solid #dcdcdc; box-shadow: inset 1px 1px #fafafa; }
.scheme { display: flex; align-items: center; height: 42px; padding: 0 15px 0 11px; }
.dlg-body input:not([type="checkbox"]) { height: 21px; padding: 0 2px 2px; border: 1px solid #7a7a7a; background: #fff; font: 10px/16px "DejaVu Sans Mono", monospace; }
.dlg-body select {
  height: 20px; padding: 0 2px; border: 1px solid #adadad; border-radius: 0; appearance: none;
  background: #e1e1e1 url("data:image/svg+xml,%3Csvg xmlns='http://www.w3.org/2000/svg' width='10' height='6'%3E%3Cpath d='M1 1l4 4 4-4' fill='none' stroke='%23555'/%3E%3C/svg%3E") no-repeat right 3px center;
}
.dlg-body select.mono { font: 10px/16px "DejaVu Sans Mono", monospace; }
.combo { position: relative; display: flex; width: 96px; height: 20px; margin: 0 16px 0 9px; border: 1px solid #0a6fc2; background: #fff; }
.combo input:not([type="checkbox"]) { flex: 1; width: 0; height: 18px; border: 0; outline: 0; background: none; }
.combo button { width: 18px; }
.combo svg { width: 10px; height: 6px; }
.caret { position: absolute; left: 3px; top: 3px; width: 1px; height: 12px; background: #000; }
.tool { width: 22px; height: 22px; border: 1px solid #adadad; background: #e1e1e1; }
.tool svg { width: 16px; height: 16px; }
.del { margin: 0 25px 0 17px; }
.scheme select { width: 55px; margin-left: 6px; }
.push { margin-left: auto; }
.far { margin-left: 14px; }
.scheme #grow { width: 50px; margin-left: 6px; }
.params { display: grid; grid-template-columns: repeat(4, auto); justify-content: space-between; row-gap: 14px; margin-top: 14px; padding: 19px 15px 18px 11px; }
.params div { display: flex; align-items: center; gap: 9px; height: 21px; }
.params label { padding-bottom: 2px; }
.params input, .params select { width: 65px; }

/* file grid */
.grid { margin-top: 17px; padding-bottom: 3px; border: 1px solid #000; border-width: 2px 1px 1px; background: #a0a0a0; }
table { width: 100%; table-layout: fixed; border-spacing: 0; background: #fff; font: 10px/12px "DejaVu Sans Mono", monospace; }
.c-no { width: 41px; }
.c-name { width: 186px; }
.c-qty { width: 59px; }
.c-mat { width: 64px; }
th, td { padding: 0 0 0 1px; border: solid #a0a0a0; border-width: 0 1px 1px 0; text-align: left; white-space: pre; font-weight: 400; }
thead th { height: 19px; padding-left: 5px; font: 12px/16px "Noto Sans CJK SC", sans-serif; border-right-color: #e0e0e0; }
tbody td, tbody th { height: 23px; padding-top: 2px; }
tbody th { position: relative; padding-left: 22px; border-bottom-color: #e0e0e0; }
td:last-child, th:last-child { border-right: 0; }
.sel td { background: #0078d7; color: #fff; }
.sel th { background: #bcdcf4; }
.sel th::before { content: ""; position: absolute; left: 7px; top: 8px; border: 4px solid transparent; border-left: 5px solid #444; border-right: 0; }
.han { font: 12px/12px "Noto Sans CJK SC", sans-serif; }

/* dialog actions */
.actions { display: flex; align-items: center; margin-top: 18px; height: 27px; padding-left: 1px; }
.act { width: 26px; height: 26px; border: 1px solid #adadad; background: #e4e4e4; }
.act svg { width: 18px; height: 18px; }
.text { width: 74px; height: 27px; padding-bottom: 2px; border: 1px solid #adadad; background: #e1e1e1; }
.act + .text { margin: 0 23px 0 22px; }
.tick { display: flex; align-items: center; gap: 4px; margin: 4px 0 0 24px; }
.tick + .tick { margin-left: 22px; }
.tick input { appearance: none; width: 13px; height: 13px; margin: 0; border: 1px solid #333; background: #fff; }
.tick input:checked { background: #fff url("data:image/svg+xml,%3Csvg xmlns='http://www.w3.org/2000/svg' width='11' height='11'%3E%3Cpath d='M1 5l3 3 6-6' fill='none' stroke='%23333' stroke-width='1.300'/%3E%3C/svg%3E") center; }
.right { display: flex; gap: 22px; margin-left: auto; }

/* status bar */
.status { display: flex; align-items: flex-end; justify-content: flex-end; gap: 3px; height: 23px; padding: 0 1px 1px; border-top: 1px solid #fff; background: #f0f0f0; font: 12px/17px "Open Sans", sans-serif; color: #777; }
.status span { padding: 0 3px; border: 1px solid #a0a0a0; border-color: #a0a0a0 #fff #fff #a0a0a0; }
.status .lit { color: #000; }
.status svg { width: 12px; height: 12px; margin-left: 4px; }
```
